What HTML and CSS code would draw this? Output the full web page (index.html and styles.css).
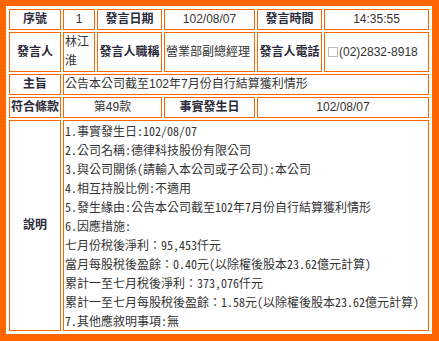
FILE: index.html
```html
<!DOCTYPE html>
<html lang="zh-Hant">
<head>
<meta charset="utf-8">
<title>重大訊息</title>
<link rel="stylesheet" href="styles.css">
</head>
<body>
<div class="frame">
  <table class="info">
    <colgroup>
      <col class="c1"><col class="c2"><col class="c3"><col class="c4"><col class="c5"><col class="c6">
    </colgroup>
    <tr>
      <td class="lbl">序號</td>
      <td class="ctr">1</td>
      <td class="lbl">發言日期</td>
      <td class="ctr">102/08/07</td>
      <td class="lbl">發言時間</td>
      <td class="ctr">14:35:55</td>
    </tr>
    <tr>
      <td class="lbl">發言人</td>
      <td>林江淮</td>
      <td class="lbl">發言人職稱</td>
      <td>營業部副總經理</td>
      <td class="lbl">發言人電話</td>
      <td><span class="box"></span>(02)2832-8918</td>
    </tr>
    <tr>
      <td class="lbl">主旨</td>
      <td colspan="5">公告本公司截至102年7月份自行結算獲利情形</td>
    </tr>
    <tr>
      <td class="lbl">符合條款</td>
      <td class="ctr" colspan="2">第49款</td>
      <td class="lbl">事實發生日</td>
      <td class="ctr" colspan="2">102/08/07</td>
    </tr>
    <tr>
      <td class="lbl">說明</td>
      <td colspan="5" class="desc">1.事實發生日:102/08/07<br>2.公司名稱:德律科技股份有限公司<br>3.與公司關係(請輸入本公司或子公司):本公司<br>4.相互持股比例:不適用<br>5.發生緣由:公告本公司截至102年7月份自行結算獲利情形<br>6.因應措施:<br>七月份稅後淨利：95,453仟元<br>當月每股稅後盈餘：0.40元(以除權後股本23.62億元計算)<br>累計一至七月稅後淨利：373,076仟元<br>累計一至七月每股稅後盈餘：1.58元(以除權後股本23.62億元計算)<br>7.其他應敘明事項:無</td>
    </tr>
  </table>
</div>
</body>
</html>
```
FILE: styles.css
```css
html, body {
  margin: 0;
  padding: 0;
  background: #ff6600;
}
body {
  padding: 6px;
}
.frame {
  background: #ffffff;
  width: 426px;
  box-sizing: border-box;
  padding: 1px;
}
.info {
  width: 424px;
  table-layout: fixed;
  border-collapse: separate;
  border-spacing: 2px;
  font-family: "Liberation Sans", "Noto Sans CJK TC", sans-serif;
  font-size: 12px;
  color: #333333;
}
.c1 { width: 52px; }
.c2 { width: 32px; }
.c3 { width: 65px; }
.c4 { width: 91px; }
.c5 { width: 65px; }
.c6 { width: 105px; }
.info td {
  border: 1px solid #ff6600;
  padding: 0 1px;
  line-height: 19px;
  vertical-align: middle;
  text-align: left;
  word-break: break-all;
}
.info td.lbl {
  font-weight: bold;
  text-align: center;
  padding: 0;
  color: #2a2a3a;
}
.info td.ctr {
  text-align: center;
}
.box {
  display: inline-block;
  width: 10px;
  height: 10px;
  border: 1px solid #bbbbbb;
  box-sizing: border-box;
  margin: 0 1px 0 2px;
  vertical-align: -1px;
}
.info td.desc {
  font-family: "Noto Sans Mono CJK TC", "Liberation Mono", "Noto Sans CJK TC", monospace;
  font-size: 12px;
  white-space: nowrap;
}
```
